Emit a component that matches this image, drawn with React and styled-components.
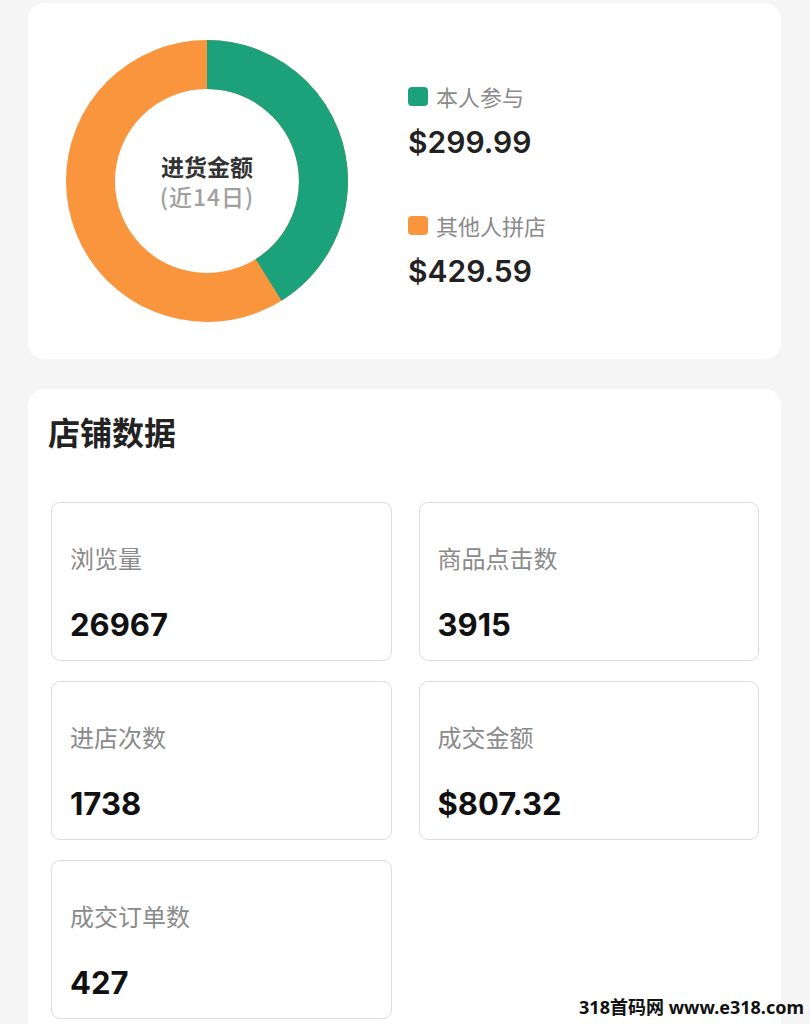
import React from "react";
import styled, { createGlobalStyle } from "styled-components";

const GlobalStyle = createGlobalStyle`
  body {
    margin: 0;
    background: #f5f5f5;
    font-family: Inter, "Noto Sans CJK SC", sans-serif;
  }
`;

const Page = styled.div`
  position: relative;
  padding: 3px 29px 0 28px;
`;

const Card = styled.div`
  background: #ffffff;
  border-radius: 16px;
`;

const ChartCard = styled(Card)`
  display: flex;
  align-items: flex-start;
  padding: 37px 38px;
  height: 282px;
`;

const DonutWrap = styled.div`
  position: relative;
  width: 282px;
  height: 282px;
  flex-shrink: 0;
`;

const DonutCenter = styled.div`
  position: absolute;
  inset: 0;
  display: flex;
  flex-direction: column;
  align-items: center;
  justify-content: center;
  gap: 2px;
`;

const CenterTitle = styled.div`
  font-family: "Noto Sans CJK SC", sans-serif;
  font-size: 23px;
  font-weight: 700;
  line-height: 28px;
  color: #333333;
`;

const CenterSub = styled.div`
  font-family: "Noto Sans CJK SC", sans-serif;
  font-size: 23px;
  font-weight: 500;
  line-height: 28px;
  letter-spacing: 1px;
  color: #a0a0a0;
`;

const Legend = styled.div`
  margin-left: 60px;
  padding-top: 44px;
  display: flex;
  flex-direction: column;
  gap: 53px;
`;

const LegendItem = styled.div`
  display: flex;
  flex-direction: column;
`;

const LegendLabel = styled.div`
  display: flex;
  align-items: center;
  gap: 8px;
  font-family: "Noto Sans CJK SC", sans-serif;
  font-size: 22px;
  line-height: 24px;
  color: #8a8a8a;
`;

const Swatch = styled.span`
  width: 20px;
  height: 19px;
  border-radius: 4px;
  background: ${(p) => p.color};
`;

const LegendValue = styled.div`
  margin-top: 16px;
  font-size: 30px;
  font-weight: 600;
  line-height: 36px;
  color: #222222;
`;

const StatsCard = styled(Card)`
  margin-top: 30px;
  padding: 22px 22px 20px 23px;
  border-bottom-left-radius: 0;
  border-bottom-right-radius: 0;
`;

const Title = styled.div`
  font-family: "Noto Sans CJK SC", sans-serif;
  font-size: 32px;
  font-weight: 700;
  line-height: 40px;
  color: #222222;
  margin-left: -3px;
`;

const Grid = styled.div`
  margin-top: 51px;
  display: grid;
  grid-template-columns: 1fr 1fr;
  column-gap: 27px;
  row-gap: 20px;
`;

const StatBox = styled.div`
  height: 159px;
  box-sizing: border-box;
  border: 1.5px solid #dcdcdc;
  border-radius: 9px;
  padding: 39px 18px 0;
`;

const StatLabel = styled.div`
  font-family: "Noto Sans CJK SC", sans-serif;
  font-size: 24px;
  line-height: 32px;
  color: #8a8a8a;
`;

const StatValue = styled.div`
  margin-top: 32px;
  font-size: 31px;
  font-weight: 700;
  line-height: 38px;
  color: #111111;
`;

const Watermark = styled.div`
  position: absolute;
  right: 6px;
  top: 994px;
  font-family: "Noto Sans", "Noto Sans CJK SC", sans-serif;
  font-size: 18px;
  font-weight: 700;
  line-height: 26px;
  color: #111111;
  white-space: nowrap;
`;

const GREEN = "#1ba27a";
const ORANGE = "#f9953d";

const share = [
  { label: "本人参与", value: 299.99, color: GREEN },
  { label: "其他人拼店", value: 429.59, color: ORANGE },
];

const stats = [
  { label: "浏览量", value: "26967" },
  { label: "商品点击数", value: "3915" },
  { label: "进店次数", value: "1738" },
  { label: "成交金额", value: "$807.32" },
  { label: "成交订单数", value: "427" },
];

function Donut() {
  const r = 116.5;
  const c = 2 * Math.PI * r;
  const total = share[0].value + share[1].value;
  const g = (share[0].value / total) * c;
  return (
    <DonutWrap>
      <svg width="282" height="282" viewBox="0 0 282 282">
        <circle cx="141" cy="141" r={r} fill="none" stroke={ORANGE} strokeWidth="49" />
        <circle
          cx="141"
          cy="141"
          r={r}
          fill="none"
          stroke={GREEN}
          strokeWidth="49"
          strokeDasharray={`${g} ${c}`}
          transform="rotate(-90 141 141)"
        />
      </svg>
      <DonutCenter>
        <CenterTitle>进货金额</CenterTitle>
        <CenterSub>(近14日)</CenterSub>
      </DonutCenter>
    </DonutWrap>
  );
}

export default function App() {
  return (
    <>
      <GlobalStyle />
      <Page>
        <ChartCard>
          <Donut />
          <Legend>
            {share.map((s) => (
              <LegendItem key={s.label}>
                <LegendLabel>
                  <Swatch color={s.color} />
                  {s.label}
                </LegendLabel>
                <LegendValue>${s.value.toFixed(2)}</LegendValue>
              </LegendItem>
            ))}
          </Legend>
        </ChartCard>
        <StatsCard>
          <Title>店铺数据</Title>
          <Grid>
            {stats.map((s) => (
              <StatBox key={s.label}>
                <StatLabel>{s.label}</StatLabel>
                <StatValue>{s.value}</StatValue>
              </StatBox>
            ))}
          </Grid>
        </StatsCard>
        <Watermark>318首码网 www.e318.com</Watermark>
      </Page>
    </>
  );
}
